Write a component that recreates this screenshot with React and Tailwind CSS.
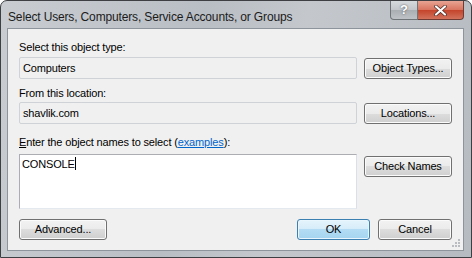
import React from "react";

const font = { fontFamily: '"Liberation Sans", Arial, sans-serif' };

function WinButton({ children, w, primary }) {
    return (
        <div
            className={
                "h-[21px] rounded-[3px] border flex items-center justify-center text-[11px] text-black shrink-0 " +
                (primary
                    ? "border-[#3c7fb1] bg-[linear-gradient(#e5f4fc_0%,#d5ecf9_50%,#b3dcf4_50%,#a5d4f0_100%)] shadow-[inset_0_0_0_1px_#e9f6fd]"
                    : "border-[#707070] bg-[linear-gradient(#f2f2f2_0%,#ebebeb_50%,#dddddd_50%,#cfcfcf_100%)] shadow-[inset_0_0_0_1px_#fbfbfb]")
            }
            style={{ width: w }}
        >
            {children}
        </div>
    );
}

export default function App() {
    return (
        <div className="w-[472px] h-[258px] bg-white" style={font}>
            <div className="w-[472px] h-[258px] rounded-t-[7px] border border-[#3d3f42] bg-[linear-gradient(100deg,#c9cdd2_0%,#b9bec4_40%,#c4c8cd_60%,#b6bbc1_100%)] flex flex-col">
                {/* title bar */}
                <div className="h-[27px] flex items-start shrink-0">
                    <div className="pl-[7px] pt-[9px] text-[12px] leading-[14px] tracking-[-0.15px] text-[#1b1b1b] flex-1">
                        Select Users, Computers, Service Accounts, or Groups
                    </div>
                    <div className="flex mr-[7px]">
                        <div className="w-[28px] h-[19px] rounded-bl-[4px] border border-t-0 border-[#6f7479] bg-[linear-gradient(#d7dadd_0%,#c2c6ca_50%,#a9aeb3_50%,#bfc3c7_100%)] flex items-center justify-center text-white font-bold text-[13px] [text-shadow:0_0_2px_#444]">
                            ?
                        </div>
                        <div className="w-[46px] h-[19px] rounded-br-[4px] border border-l-0 border-t-0 border-[#6f3b33] bg-[linear-gradient(#e8a493_0%,#d7735e_50%,#c4432a_50%,#d2725b_100%)] flex items-center justify-center">
                            <svg width="13" height="11" viewBox="0 0 13 11">
                                <path d="M2 1.5 L11 9.5 M11 1.5 L2 9.5" stroke="#4a2a24" strokeWidth="3.6" strokeLinecap="round" />
                                <path d="M2 1.5 L11 9.5 M11 1.5 L2 9.5" stroke="#ffffff" strokeWidth="2.2" strokeLinecap="round" />
                            </svg>
                        </div>
                    </div>
                </div>
                {/* client area */}
                <div className="ml-[6px] mr-[7px] h-[223px] border border-[#8e949b] bg-[#f0f0f0] px-[11px] flex flex-col text-[11px] tracking-[-0.15px] text-black relative">
                    <div className="mt-[11px] leading-[14px]">Select this object type:</div>
                    <div className="flex gap-[7px] mt-[3px]">
                        <div className="flex-1 h-[22px] border border-[#cfd2d6] rounded-[2px] bg-[#f0f0f0] px-[3px] flex items-center">
                            Computers
                        </div>
                        <div className="mt-[1px]">
                            <WinButton w={88}>Object Types...</WinButton>
                        </div>
                    </div>
                    <div className="mt-[7px] leading-[14px]">From this location:</div>
                    <div className="flex gap-[7px] mt-[2px]">
                        <div className="flex-1 h-[22px] border border-[#cfd2d6] rounded-[2px] bg-[#f0f0f0] px-[3px] flex items-center">
                            shavlik.com
                        </div>
                        <div className="mt-[1px]">
                            <WinButton w={88}>Locations...</WinButton>
                        </div>
                    </div>
                    <div className="mt-[11px] leading-[14px]">
                        <span className="underline">E</span>nter the object names to select (
                        <span className="text-[#0066cc] underline">examples</span>):
                    </div>
                    <div className="flex gap-[7px] mt-[5px]">
                        <div className="flex-1 h-[55px] border border-[#abadb3] border-b-[#e3e9ef] border-r-[#dbdfe6] bg-white px-[2px] pt-[1px]">
                            <span>CONSOLE</span>
                            <span className="inline-block w-px h-[13px] bg-black align-[-2px]"></span>
                        </div>
                        <div className="mt-[2px]">
                            <WinButton w={88}>Check Names</WinButton>
                        </div>
                    </div>
                    <div className="flex mt-[10px]">
                        <WinButton w={88}>Advanced...</WinButton>
                        <div className="flex-1"></div>
                        <WinButton w={73} primary>OK</WinButton>
                        <div className="w-[8px]"></div>
                        <WinButton w={74}>Cancel</WinButton>
                    </div>
                    <svg className="absolute right-[2px] bottom-[2px]" width="10" height="10" viewBox="0 0 10 10">
                        {[[7, 1], [4, 4], [7, 4], [1, 7], [4, 7], [7, 7]].map(([x, y], i) => (
                            <rect key={i} x={x} y={y} width="2" height="2" fill="#b9bcc0" />
                        ))}
                    </svg>
                </div>
            </div>
        </div>
    );
}
